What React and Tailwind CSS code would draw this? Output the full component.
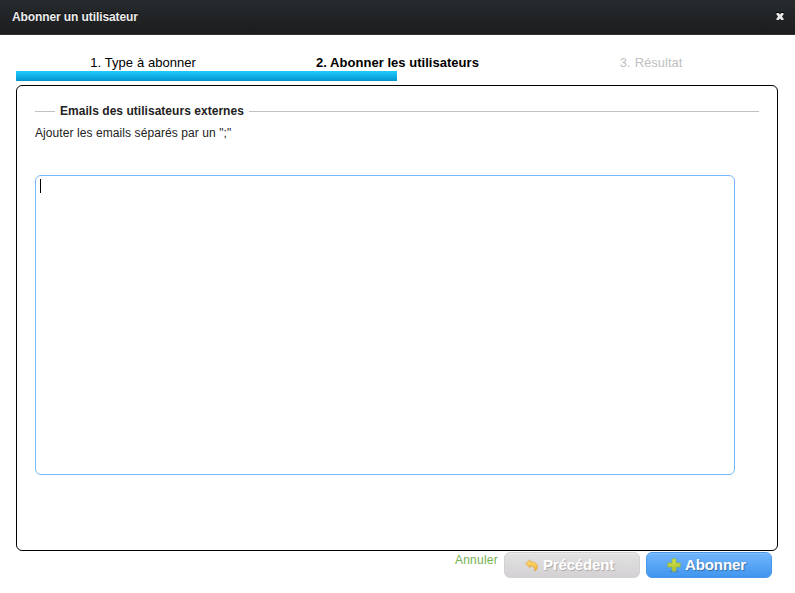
const STEPS = [
  { label: '1. Type à abonner', style: 'text-black [word-spacing:0.3px]' },
  { label: '2. Abonner les utilisateurs', style: 'pl-px font-bold tracking-[0.03px] text-black' },
  { label: '3. Résultat', style: 'text-[#c0c0c0] [word-spacing:0.6px]' },
];

function CloseIcon() {
  return (
    <svg width="8" height="8" viewBox="0 0 8 8" className="block overflow-visible">
      <path d="M0 0.5 H2.5 L4 2 L5.5 0.5 H8" fill="none" stroke="#000" />
      <path
        d="M0.5 1 H2.7 L4 2.4 L5.3 1 H7.5 V2.6 L5.9 4.5 L7.5 6.4 V8 H5.3 L4 6.6 L2.7 8 H0.5 V6.4 L2.1 4.5 L0.5 2.6 Z"
        fill="#e9e9e9"
      />
    </svg>
  );
}

function BackIcon() {
  return (
    <svg width="14" height="13" viewBox="0 0 14 13" className="block">
      <defs>
        <linearGradient id="back" x1="0" y1="0" x2="0" y2="1">
          <stop offset="0" stopColor="#ffe27c" />
          <stop offset="1" stopColor="#f3ae2d" />
        </linearGradient>
      </defs>
      <path
        d="M0.7 4.7 L4.8 0.8 V2.8 C9.5 2.4 12.6 4.8 12.4 8 C12.3 9.8 11.4 11.2 9.6 12 C10.2 9.3 8.7 6.9 5.2 6.8 V8.8 Z"
        fill="url(#back)"
        stroke="#dca84c"
        strokeWidth="0.8"
        strokeLinejoin="round"
      />
    </svg>
  );
}

function PlusIcon() {
  return (
    <svg width="14" height="14" viewBox="0 0 14 14" className="block overflow-visible">
      <defs>
        <linearGradient id="plus" x1="0" y1="0" x2="0" y2="1">
          <stop offset="0" stopColor="#d3e04c" />
          <stop offset="1" stopColor="#a9c42c" />
        </linearGradient>
      </defs>
      <ellipse cx="7" cy="13.2" rx="5" ry="1" fill="#2d609c" opacity="0.35" />
      <path
        d="M5 0.8 H9 V5 H13.2 V9 H9 V13.2 H5 V9 H0.8 V5 H5 Z"
        fill="url(#plus)"
        stroke="#94b252"
        strokeWidth="0.8"
        strokeLinejoin="round"
      />
    </svg>
  );
}

export default function App() {
  return (
    <div className="h-[593px] w-[795px] overflow-hidden bg-white font-['Liberation_Sans',Arial,sans-serif] text-[12px] text-[#222]">
      <header className="flex h-[35px] items-center justify-between border-b border-[#303234] bg-linear-to-b from-[#272b2e] to-[#1b1c1d] pr-[11px] pl-3">
        <h1 className="text-[12px] leading-[14px] font-bold tracking-[-0.1px] text-[#eee] [text-shadow:0_-1px_0_#000]">
          Abonner un utilisateur
        </h1>
        <button type="button" aria-label="Fermer" className="pb-[2px]">
          <CloseIcon />
        </button>
      </header>

      <main className="pt-5 pr-[17px] pl-4">
        <ol className="grid grid-cols-3 text-center text-[13px] leading-4">
          {STEPS.map((step) => (
            <li key={step.label} className={step.style}>
              {step.label}
            </li>
          ))}
        </ol>
        <div className="h-[10px] w-1/2 bg-linear-to-b from-[#1fcdff] to-[#0294cf]" />

        <section className="mt-1 h-[466px] rounded-[6px] border border-black px-[18px] pt-[17px]">
          <div className="flex h-4 items-center gap-[5px]">
            <span className="mt-px h-px w-5 bg-[#c0c0c0]" />
            <h2 className="leading-4 font-bold tracking-[0.035px]">Emails des utilisateurs externes</h2>
            <span className="mt-px h-px flex-1 bg-[#c0c0c0]" />
          </div>
          <p className="mt-[6px] leading-4 tracking-[0.08px]">Ajouter les emails séparés par un ";"</p>
          <div className="mt-[34px] h-[300px] w-[700px] rounded-[6px] border border-[#77b7fb] pt-[3px] pl-1">
            <div className="h-[14px] w-px bg-black" />
          </div>
        </section>

        <footer className="mt-px flex justify-end gap-[6px] pr-[6px]">
          <a className="text-[12px] leading-4 tracking-[0.25px] text-[#75b152]">Annuler</a>
          <button
            type="button"
            className="flex h-[26px] w-[136px] items-center justify-center gap-1 rounded-[6px] border border-[#d2d0d2] bg-linear-to-b from-[#e3e2e3] to-[#d3d1d3] pr-[5px] text-[15px] font-bold tracking-[-0.15px] text-white shadow-[inset_0_1px_0_#ebeaeb] [text-shadow:1px_1px_1px_#aaa]"
          >
            <BackIcon />
            Précédent
          </button>
          <button
            type="button"
            className="flex h-[26px] w-[126px] items-center justify-center gap-1 rounded-[6px] border border-[#4796e9] bg-linear-to-b from-[#70b5fc] to-[#4096ef] pr-[5px] text-[15px] font-bold tracking-[-0.1px] text-white shadow-[inset_0_1px_0_#83c1ff] [text-shadow:1px_1px_1px_#356fac]"
          >
            <PlusIcon />
            Abonner
          </button>
        </footer>
      </main>
    </div>
  );
}
